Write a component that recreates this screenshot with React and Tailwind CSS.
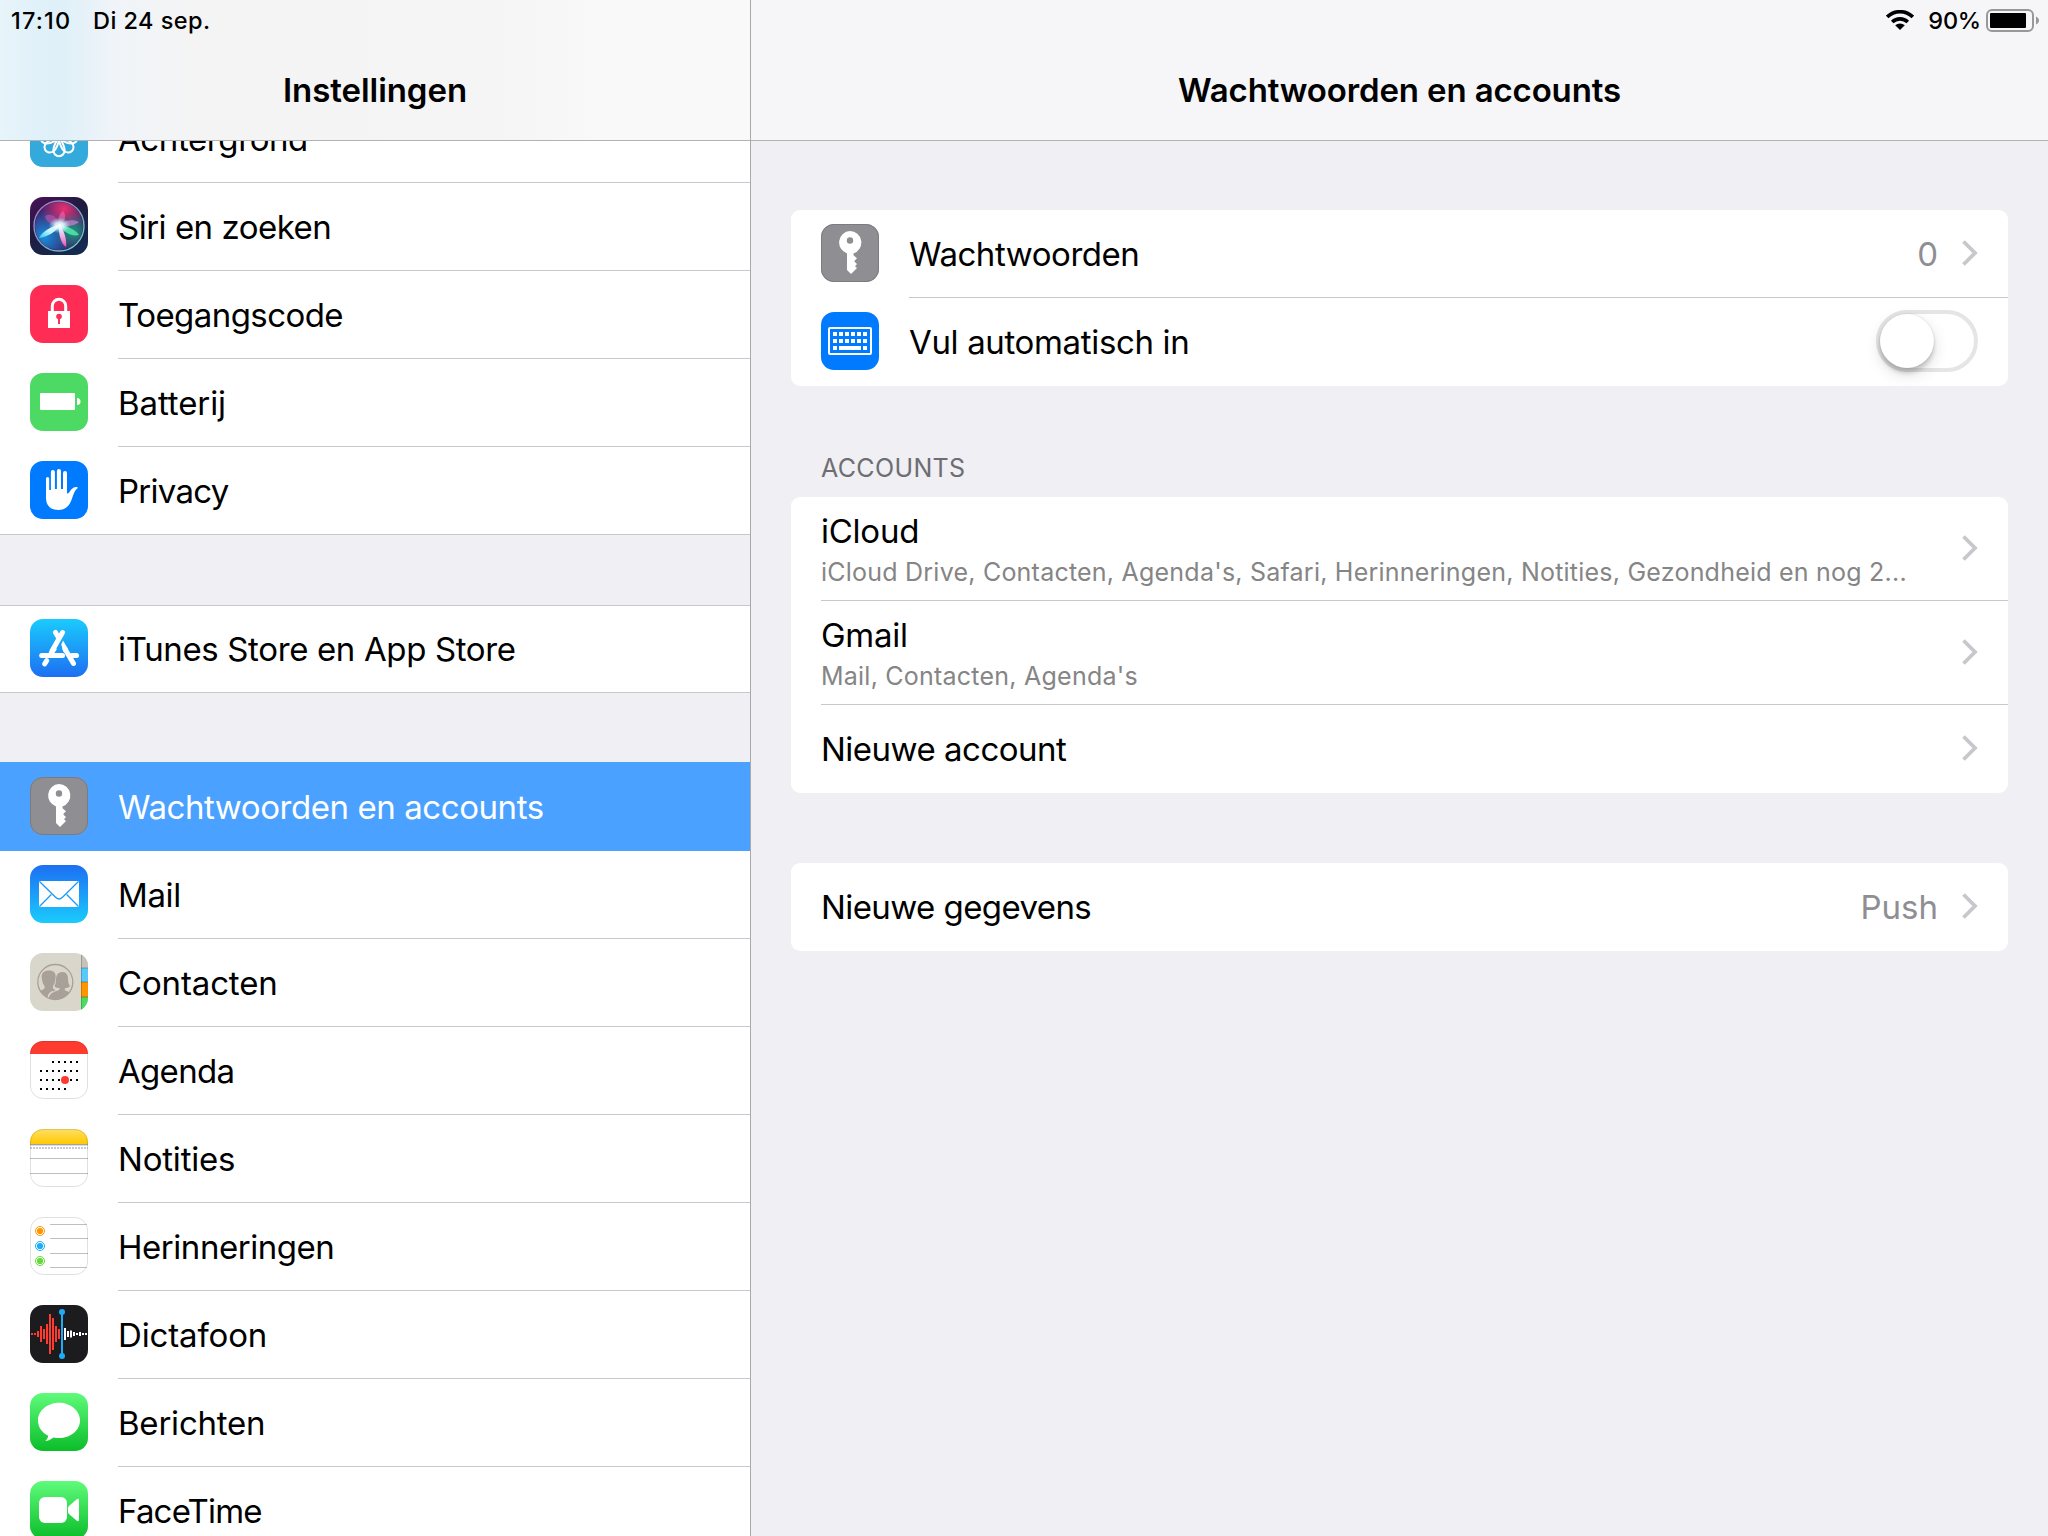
import { useId } from "react";

/* ---------- icon tiles (58 × 58) ---------- */

function Tile({ children, fill, stroke }) {
  const id = useId();
  return (
    <svg viewBox="0 0 58 58" className="mt-[14px] block size-[58px] shrink-0">
      <clipPath id={id}>
        <rect width="58" height="58" rx="13" />
      </clipPath>
      <g clipPath={`url(#${id})`}>
        <rect width="58" height="58" fill={fill} />
        {children}
      </g>
      {stroke && <rect x=".5" y=".5" width="57" height="57" rx="12.5" fill="none" stroke={stroke} />}
    </svg>
  );
}

function Gradient({ id, from, to }) {
  return (
    <linearGradient id={id} x1="0" y1="0" x2="0" y2="1">
      <stop offset="0" stopColor={from} />
      <stop offset="1" stopColor={to} />
    </linearGradient>
  );
}

const WallpaperIcon = () => (
  <Tile fill="#34aadc">
    {[0, 45, 90, 135, 180, 225, 270, 315].map((a) => (
      <path
        key={a}
        d="M29 28c-3.600 5.500-5.600 9-5.600 13.300a5.600 6 0 0 0 11.200 0C34.600 37 32.600 33.500 29 28z"
        transform={`rotate(${a} 29 29)`}
        fill="none"
        stroke="#fff"
        strokeWidth="2"
      />
    ))}
  </Tile>
);

const SiriIcon = () => (
  <Tile fill="url(#siri-bg)">
    <defs>
      <linearGradient id="siri-bg" x1="0" y1="0" x2=".6" y2="1">
        <stop offset="0" stopColor="#4a1158" />
        <stop offset=".5" stopColor="#1f1b40" />
        <stop offset="1" stopColor="#142a50" />
      </linearGradient>
      <linearGradient id="siri-ring" x1="0" y1="0" x2="1" y2="1">
        <stop offset="0" stopColor="#b472c0" />
        <stop offset=".5" stopColor="#7f9fc4" />
        <stop offset="1" stopColor="#6fd2c0" />
      </linearGradient>
      <radialGradient id="siri-pink" cx=".6" cy=".15" r=".5">
        <stop offset="0" stopColor="#e8306f" />
        <stop offset="1" stopColor="#e8306f" stopOpacity="0" />
      </radialGradient>
      <radialGradient id="siri-blue" cx=".2" cy=".72" r=".55">
        <stop offset="0" stopColor="#1690dc" />
        <stop offset="1" stopColor="#1690dc" stopOpacity="0" />
      </radialGradient>
      <radialGradient id="siri-green" cx=".8" cy=".62" r=".4">
        <stop offset="0" stopColor="#1c9a7c" />
        <stop offset="1" stopColor="#1c9a7c" stopOpacity="0" />
      </radialGradient>
      <radialGradient id="siri-glow" cx=".5" cy=".5" r=".5">
        <stop offset="0" stopColor="#fff" />
        <stop offset=".4" stopColor="#e2fcff" stopOpacity=".85" />
        <stop offset="1" stopColor="#9fe8ff" stopOpacity="0" />
      </radialGradient>
      <linearGradient id="siri-cyan" x1="1" y1="0" x2="0" y2="1">
        <stop offset="0" stopColor="#fff" />
        <stop offset=".5" stopColor="#c4f8ff" />
        <stop offset="1" stopColor="#35c3ee" />
      </linearGradient>
      <linearGradient id="siri-magenta" x1="0" y1="0" x2="0" y2="1">
        <stop offset="0" stopColor="#fff" />
        <stop offset=".5" stopColor="#f3b3e6" />
        <stop offset="1" stopColor="#f04fa0" />
      </linearGradient>
    </defs>
    <circle cx="29" cy="29" r="24" fill="#3a2370" />
    <circle cx="29" cy="29" r="24" fill="url(#siri-pink)" />
    <circle cx="29" cy="29" r="24" fill="url(#siri-blue)" />
    <circle cx="29" cy="29" r="24" fill="url(#siri-green)" />
    <path d="M30 28C26 18 20 16 15 19c1 6 7 10 15 9z" fill="#d65bb0" opacity=".5" />
    <path d="M30 28c-3-6-1-11 3-14 4 5 2 10-3 14z" fill="#f47cc0" opacity=".5" />
    <path d="M29 28c6-5 14-6 20-3-4 4-13 5-20 3z" fill="#cf7fd6" opacity=".7" />
    <path d="M31 27C21 29 12 35 9 41c8-1 17-6 22-14z" fill="url(#siri-cyan)" />
    <path d="M29 28c6 0 16 4 20 10-7 2-16-3-20-10z" fill="#4fe3a6" opacity=".9" />
    <path d="M29 27c5 6 8 15 7 23-5-3-8-14-7-23z" fill="url(#siri-magenta)" />
    <ellipse cx="29.500" cy="28.500" rx="11" ry="8" fill="url(#siri-glow)" />
    <circle cx="29" cy="29" r="25" fill="none" stroke="url(#siri-ring)" strokeWidth="1.400" />
  </Tile>
);

const PasscodeIcon = () => (
  <Tile fill="#ff2d55">
    <path d="M22.300 27V21a6.700 6.700 0 0 1 13.400 0V27" fill="none" stroke="#fff" strokeWidth="3" />
    <rect x="18" y="26" width="22" height="17" fill="#fff" />
    <circle cx="29" cy="31.500" r="2.800" fill="#ff2d55" />
    <rect x="28" y="32" width="2" height="7" fill="#ff2d55" />
  </Tile>
);

const BatteryIcon = () => (
  <Tile fill="#4cd964">
    <rect x="10" y="20" width="35" height="17" rx="1" fill="#fff" />
    <path d="M47 25a3.500 3.500 0 0 1 0 7z" fill="#fff" />
  </Tile>
);

const PrivacyIcon = () => (
  <Tile fill="#007aff">
    <path
      d="M16 17.500a1.600 1.600 0 0 1 3.200 0V29h1.700V11a2 2 0 0 1 4 0V28h2V10a2 2 0 0 1 4.100 0V28h2V12a2 2 0 0 1 4 0V32.500c1.600 0 2.200-1 3.500-3 1.800-2.600 4-4 6.500-3.500.9.200.9.900.3 1.400C44.500 29.500 43.500 33 42 37.500 39.500 45 35.500 49 28.500 49 20.500 49 16 44.500 16 37z"
      fill="#fff"
    />
  </Tile>
);

const AppStoreIcon = () => (
  <Tile fill="url(#store-bg)">
    <Gradient id="store-bg" from="#1bcbfd" to="#1d6ff2" />
    <g stroke="#fff" strokeWidth="5" strokeLinecap="round" fill="none">
      <path d="M32.500 13.500 22 32" />
      <path d="M25.500 13.500 28.500 18.500" />
      <path d="M35 30 43.500 44.500" />
      <path d="M16.700 41.700 14.700 44.800" />
      <path d="M11.700 36.500H32.500" />
      <path d="M42 36.500H46.500" />
    </g>
    <path d="M31.300 25.500 33 21.500 38 30 33.500 33z" fill="#fff" />
    <path d="M17.500 36 22.500 27 27 30 23 36z" fill="#fff" />
  </Tile>
);

const KeyIcon = () => (
  <Tile fill="#8e8e93" stroke="#7b7b80">
    <path
      fillRule="evenodd"
      d="M29 7a11.500 11.500 0 0 1 3.500 22.400v1.800l3.500 3-2.500 2.600v1l2.500 2.200-2 2.300 2 1.700-6 6-4-4V29.400A11.500 11.500 0 0 1 29 7zm0 6.300a3.200 3.200 0 1 0 0 6.400 3.200 3.200 0 0 0 0-6.400z"
      fill="#fff"
    />
  </Tile>
);

const MailIcon = () => (
  <Tile fill="url(#mail-bg)">
    <Gradient id="mail-bg" from="#1d6ff2" to="#1bcbfd" />
    <rect x="9" y="16" width="40" height="26" rx="1" fill="#fff" />
    <path
      d="M9.500 16.500 25 31.800c2.600 2.900 5.400 2.900 8 0L48.500 16.500M9.500 41.500 21.300 29.500M48.500 41.500 36.700 29.500"
      fill="none"
      stroke="#1f9bf7"
      strokeWidth="1.300"
    />
  </Tile>
);

const ContactsIcon = () => (
  <Tile fill="#d9d6cc">
    <clipPath id="people-clip">
      <circle cx="25.300" cy="29" r="17.500" />
    </clipPath>
    <g clipPath="url(#people-clip)" fill="#a8a099">
      <path d="M26.500 48V38.500c3.500-1.500 3.500-2 3-3.500-3 .2-4.500-.8-5-2 2-3.500 1-7 2-10 1.500-5 9.500-5.500 11-.5 1 3.500 0 7.500 2.500 10.500-1 1.400-2.500 2-5 2-.5 2 0 2.700 2.500 3.500 3 1 6 2 8 4v6z" />
      <path d="M4 48V41c2-2.300 5-2.800 8-4 2.500-1 3-2 2.500-4-1.500-2-2-3.500-2.300-5.500C10.500 21 13 17.500 19 17.500s7.500 3.500 6.200 10c-.3 2-.8 3.500-2.200 5.500-.5 2 0 3 2.500 4L21 40c-2 1.500-3 3-3 8z" />
      <path d="M18.500 48c0-6 2-8 5-9 2-.7 4-1 6-2.500l8 2 6 5V48z" />
      <path d="M18.300 44c.5-3 2.200-4.500 5-5.500" fill="none" stroke="#d9d6cc" strokeWidth="1.500" />
    </g>
    <circle cx="25.300" cy="29" r="17.500" fill="none" stroke="#a8a099" strokeWidth="1.300" />
    <rect x="51" y="0" width="7" height="15" fill="#c4c2b9" />
    <rect x="51" y="15" width="7" height="14" fill="#5ac8fa" />
    <rect x="51" y="29" width="7" height="15" fill="#ff9500" />
    <rect x="51" y="44" width="7" height="14" fill="#4cd964" />
    <path d="M51 15h7M51 29h7M51 44h7" stroke="#000" strokeOpacity=".25" />
    <path d="M51.500 0v58" stroke="#000" strokeOpacity=".2" />
  </Tile>
);

const dots = [
  [21, [23, 29, 35, 41, 47]],
  [30, [11, 17, 23, 29, 35, 41, 47]],
  [39, [11, 17, 23, 29, 41, 47]],
  [48, [11, 17, 23, 29, 35]],
];

const CalendarIcon = () => (
  <Tile fill="#fff" stroke="rgba(0,0,0,.12)">
    <rect width="58" height="13" fill="#ff3b30" />
    {dots.map(([y, xs]) => xs.map((x) => <rect key={`${x}-${y}`} x={x - 1} y={y - 1} width="2" height="2" fill="#000" />))}
    <circle cx="35" cy="39" r="4" fill="#ff3b30" />
  </Tile>
);

const NotesIcon = () => (
  <Tile fill="#fff" stroke="rgba(0,0,0,.12)">
    <Gradient id="notes-bg" from="#ffdf66" to="#ffc900" />
    <rect width="58" height="15" fill="url(#notes-bg)" />
    <path d="M0 15.500h58" stroke="#a3a3a6" />
    <path d="M0 16.500h58" stroke="#dcdcdc" />
    <path d="M0 19h58" stroke="#c9c9cb" strokeWidth="2" strokeDasharray="2 1" />
    <path d="M0 29.500h58M0 44.500h58" stroke="#bfbec4" />
  </Tile>
);

const RemindersIcon = () => (
  <Tile fill="#fff" stroke="rgba(0,0,0,.12)">
    {[
      [14, "#ff9500"],
      [29, "#1badf8"],
      [44, "#63da38"],
    ].map(([y, c]) => (
      <g key={y}>
        <circle cx="10" cy={y} r="4.500" fill="none" stroke={c} />
        <circle cx="10" cy={y} r="3.100" fill={c} />
      </g>
    ))}
    <path d="M20 7.500h37M20 21.500h38M20 36.500h38M20 50.500h37" stroke="#bfbec4" />
  </Tile>
);

const redBars = [2, 2, 6, 16, 10, 20, 40, 32, 16, 10];
const whiteBars = [12, 6, 7, 4, 2, 4, 2, 2];

const VoiceMemosIcon = () => (
  <Tile fill="#1c1c1e">
    {redBars.map((h, i) => (
      <rect key={i} x={1 + i * 3} y={29 - h / 2} width="2" height={h} fill="#ff3b30" />
    ))}
    {whiteBars.map((h, i) => (
      <rect key={i} x={34 + i * 3} y={29 - h / 2} width="2" height={h} fill="#fff" />
    ))}
    <rect x="31" y="7" width="2" height="44" fill="#1badf8" />
    <circle cx="32" cy="7" r="3" fill="#1badf8" />
    <circle cx="32" cy="51" r="3" fill="#1badf8" />
  </Tile>
);

const MessagesIcon = () => (
  <Tile fill="url(#msg-bg)">
    <Gradient id="msg-bg" from="#5ffb7b" to="#0bbd29" />
    <path
      d="M29 9.800c11.600 0 21 7.900 21 17.600S40.600 45 29 45c-2 0-3.800-.2-5.500-.6-2.500 2-5.500 3.300-8.200 3.600 1.700-1.500 2.700-3.300 2.900-5.300C12 39.600 8 34 8 27.400 8 17.700 17.400 9.800 29 9.800z"
      fill="#fff"
    />
  </Tile>
);

const FaceTimeIcon = () => (
  <Tile fill="url(#ft-bg)">
    <Gradient id="ft-bg" from="#5ffb7b" to="#0bbd29" />
    <rect x="9" y="16" width="28" height="26" rx="6" fill="#fff" />
    <path d="M38 27.500c0-1.500.5-2 1.500-3l7-6c1.500-1.200 2.500-.7 2.500 1v19c0 1.700-1 2.200-2.500 1l-7-6c-1-1-1.500-1.500-1.500-3z" fill="#fff" />
  </Tile>
);

const KeyboardIcon = () => (
  <Tile fill="#007aff">
    <rect x="8" y="16" width="42" height="26" rx="1" fill="none" stroke="#fff" strokeWidth="2" />
    {[12, 18, 24, 30, 36, 42].map((x) => (
      <g key={x} fill="#fff">
        <rect x={x} y="20" width="4" height="4" />
        <rect x={x} y="27" width="4" height="4" />
      </g>
    ))}
    <path d="M12 34h4v4h-4zM18 34h22v4H18zM42 34h4v4h-4z" fill="#fff" />
  </Tile>
);

/* ---------- sidebar ---------- */

function SideRow({ icon: Icon, label, tracking, last, first, selected }) {
  return (
    <div
      className={
        "flex shrink-0 pl-[30px] " +
        (selected
          ? "-mt-px h-[89px] bg-[#4ba1ff] pt-px text-white "
          : "h-[88px] bg-white text-black ") +
        (last ? "border-b border-[#c8c7cc] " : "") +
        (first ? "shadow-[inset_0_1px_0_#c8c7cc] " : "")
      }
    >
      <Icon />
      <div
        className={
          "ml-[30px] h-full flex-1 text-[33px] leading-[88px] whitespace-nowrap " +
          (last || selected ? "" : "border-b border-[#c8c7cc] ") +
          tracking
        }
      >
        {label}
      </div>
    </div>
  );
}

function Sidebar() {
  return (
    <aside className="flex w-[751px] shrink-0 flex-col border-r border-[#a9a9ad]">
      <header className="h-[141px] shrink-0 border-b border-[#b2b2b4] bg-[linear-gradient(90deg,#e7f4fa_0px,#dff0f9_50px,#e3f1f8_75px,#f0f4f8_115px,#f4f4f5_190px,#f5f5f5_500px,#f9f9f9_600px)]">
        <div className="flex h-10 pl-[11px] text-[23.5px] leading-[41px] font-medium">
          <span className="w-[82px] tracking-[1.2px]">17:10</span>
          <span className="tracking-[0.45px]">Di 24 sep.</span>
        </div>
        <h1 className="text-center text-[33px] leading-[100px] font-semibold tracking-[-0.05px]">Instellingen</h1>
      </header>
      <div className="flex-1 overflow-hidden bg-[#efeff4]">
        <nav className="-mt-[46px] flex flex-col">
          <SideRow icon={WallpaperIcon} label="Achtergrond" tracking="tracking-[-0.4px]" />
          <SideRow icon={SiriIcon} label="Siri en zoeken" tracking="tracking-[-0.5px]" />
          <SideRow icon={PasscodeIcon} label="Toegangscode" tracking="tracking-[-0.56px]" />
          <SideRow icon={BatteryIcon} label="Batterij" tracking="tracking-[-0.1px]" />
          <SideRow icon={PrivacyIcon} label="Privacy" tracking="tracking-[-0.75px]" last />
          <div className="h-[70px]" />
          <SideRow icon={AppStoreIcon} label="iTunes Store en App Store" tracking="tracking-[-0.36px]" first last />
          <div className="h-[70px]" />
          <SideRow icon={KeyIcon} label="Wachtwoorden en accounts" tracking="tracking-[-0.43px]" selected />
          <SideRow icon={MailIcon} label="Mail" tracking="tracking-[-0.4px]" />
          <SideRow icon={ContactsIcon} label="Contacten" tracking="tracking-[-0.15px]" />
          <SideRow icon={CalendarIcon} label="Agenda" tracking="tracking-[-0.7px]" />
          <SideRow icon={NotesIcon} label="Notities" tracking="tracking-[-0.2px]" />
          <SideRow icon={RemindersIcon} label="Herinneringen" tracking="tracking-[-0.46px]" />
          <SideRow icon={VoiceMemosIcon} label="Dictafoon" tracking="tracking-[-0.14px]" />
          <SideRow icon={MessagesIcon} label="Berichten" tracking="tracking-[-0.22px]" />
          <SideRow icon={FaceTimeIcon} label="FaceTime" tracking="tracking-[-0.8px]" />
        </nav>
      </div>
    </aside>
  );
}

/* ---------- detail pane ---------- */

const Chevron = () => (
  <svg viewBox="0 0 16 26" className="mb-px block h-[26px] w-4 self-center">
    <path d="M1.500 1.500 13 13 1.500 24.500" fill="none" stroke="#c7c7cc" strokeWidth="3.800" />
  </svg>
);

function Value({ children }) {
  return <span className="mr-6 text-[33px] leading-[88px] text-[#8e8e93]">{children}</span>;
}

function Row({ icon: Icon, label, tracking, last, children }) {
  return (
    <div className="flex h-[88px] pl-[30px]">
      {Icon && <Icon />}
      <div
        className={
          "flex h-full flex-1 pr-[30px] " +
          (Icon ? "ml-[30px] " : "") +
          (last ? "pb-px " : "border-b border-[#c8c7cc]")
        }
      >
        <span className={"flex-1 text-[33px] leading-[88px] " + tracking}>{label}</span>
        {children}
      </div>
    </div>
  );
}

function AccountRow({ name, detail, tracking }) {
  return (
    <div className="h-[104px] pl-[30px]">
      <div className="flex h-full border-b border-[#c8c7cc] pr-[30px]">
        <div className="flex-1 pt-[14px]">
          <div className="text-[33px] leading-[40px] tracking-[-0.25px]">{name}</div>
          <div className={"pt-[6px] text-[25px] leading-[30px] whitespace-nowrap text-[#858585] " + tracking}>{detail}</div>
        </div>
        <Chevron />
      </div>
    </div>
  );
}

const Card = ({ children }) => <section className="rounded-[9px] bg-white">{children}</section>;

function StatusIcons() {
  return (
    <div className="flex h-10 justify-end pr-2 text-[23.5px] leading-[41px] font-medium">
      <svg viewBox="0 0 28 20" className="mt-[10px] mr-[14px] h-5 w-7">
        <g fill="none" stroke="#000" strokeWidth="3.600">
          <path d="M1.200 6.900a18.300 18.300 0 0 1 25.600 0" />
          <path d="M6.200 12a11.200 11.200 0 0 1 15.600 0" />
        </g>
        <path d="M14 20 9.200 15.300a7 7 0 0 1 9.600 0z" />
      </svg>
      <span className="mr-[5px] tracking-[-0.2px]">90%</span>
      <svg viewBox="0 0 54 23" className="mt-[9px] h-[23px] w-[54px]">
        <rect x="1" y="1" width="46" height="21" rx="5" fill="none" stroke="#98989b" strokeWidth="2" />
        <rect x="4" y="4" width="36" height="15" rx="1" />
        <path d="M50 7.500c4 1.500 4 6.500 0 8z" fill="#98989b" />
      </svg>
    </div>
  );
}

function Detail() {
  return (
    <main className="flex flex-1 flex-col bg-[#efeff4]">
      <header className="h-[141px] shrink-0 border-b border-[#b2b2b4] bg-[#f6f6f8]">
        <StatusIcons />
        <h2 className="text-center text-[33px] leading-[100px] font-semibold tracking-[-0.14px]">
          Wachtwoorden en accounts
        </h2>
      </header>
      <div className="flex flex-col pt-[69px] pr-10 pl-10">
        <Card>
          <Row icon={KeyIcon} label="Wachtwoorden" tracking="tracking-[-0.45px]">
            <Value>0</Value>
            <Chevron />
          </Row>
          <Row icon={KeyboardIcon} label="Vul automatisch in" tracking="tracking-[-0.35px]" last>
            <div className="mt-3 h-[62px] w-[102px] rounded-full border-4 border-[#e5e5e5]">
              <div className="size-[54px] rounded-full bg-white shadow-[0_6px_16px_rgba(0,0,0,0.14),0_5px_4px_rgba(0,0,0,0.15),0_0_2px_rgba(0,0,0,0.16)]" />
            </div>
          </Row>
        </Card>
        <h3 className="mt-[67px] mb-[14px] pl-[30px] text-[25px] leading-[30px] tracking-[0.35px] text-[#6d6d72]">
          ACCOUNTS
        </h3>
        <Card>
          <AccountRow
            name="iCloud"
            detail="iCloud Drive, Contacten, Agenda's, Safari, Herinneringen, Notities, Gezondheid en nog 2..."
            tracking="tracking-[0.225px]"
          />
          <AccountRow name="Gmail" detail="Mail, Contacten, Agenda's" tracking="tracking-[0.23px]" />
          <Row label="Nieuwe account" tracking="tracking-[-0.5px]" last>
            <Chevron />
          </Row>
        </Card>
        <div className="h-[70px]" />
        <Card>
          <Row label="Nieuwe gegevens" tracking="tracking-[-0.58px]" last>
            <Value>Push</Value>
            <Chevron />
          </Row>
        </Card>
      </div>
    </main>
  );
}

export default function App() {
  return (
    <div className="flex h-[1536px] w-[2048px] overflow-hidden font-['Inter',sans-serif] text-black">
      <Sidebar />
      <Detail />
    </div>
  );
}
